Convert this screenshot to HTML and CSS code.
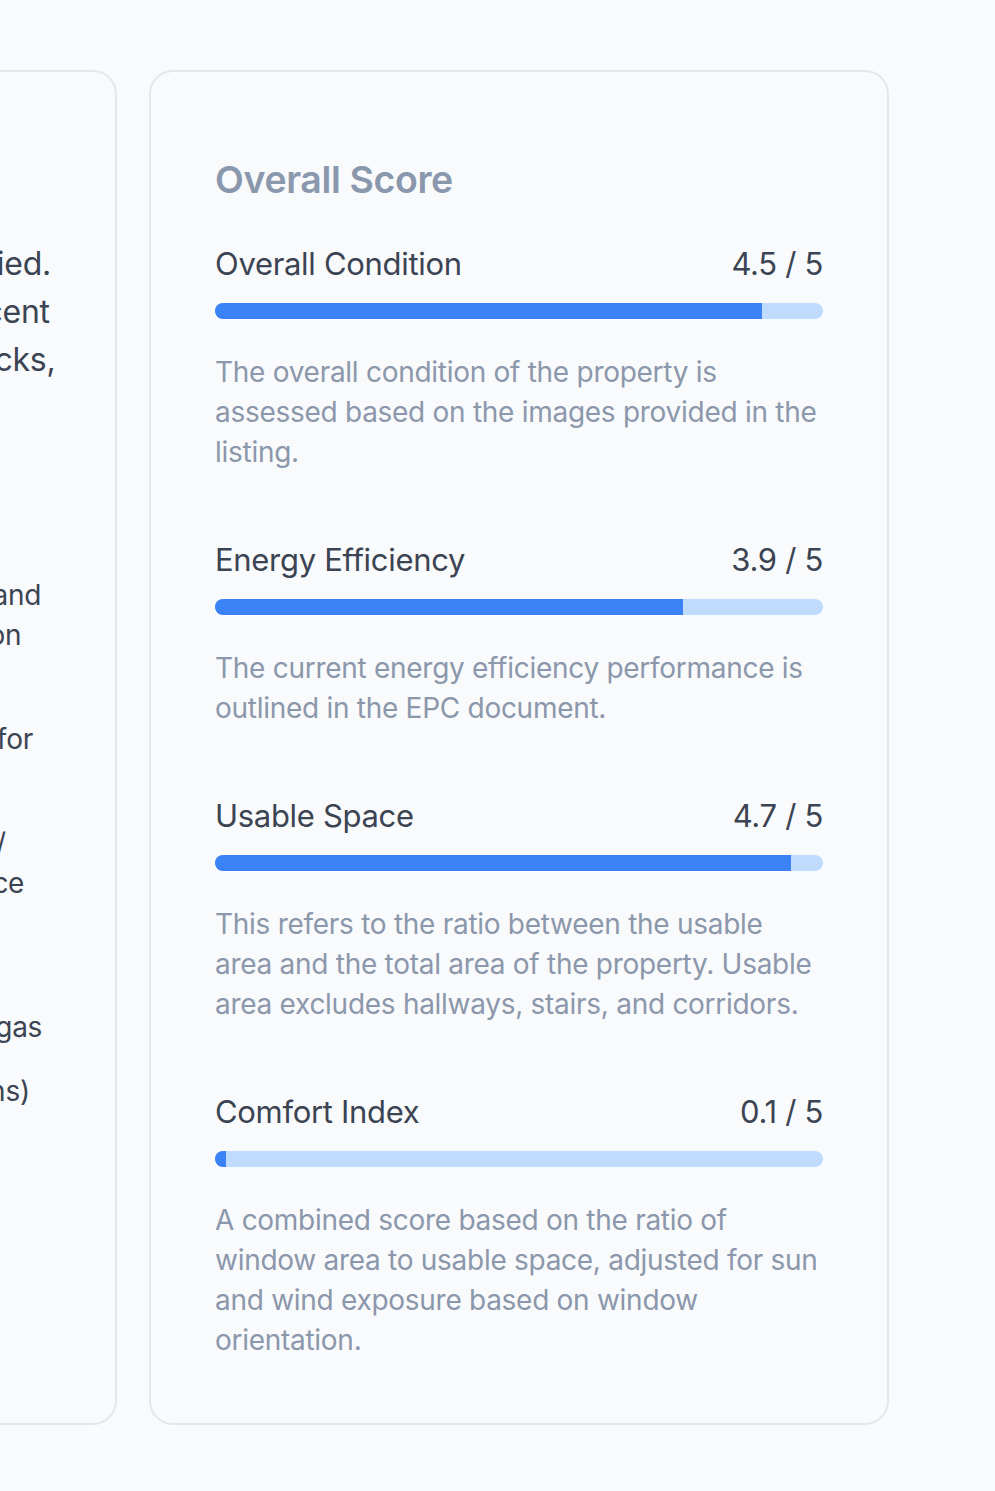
FILE: index.html
```html
<!DOCTYPE html>
<html lang="en">
<head>
<meta charset="utf-8">
<title>Property Report</title>
<link rel="stylesheet" href="styles.css">
</head>
<body>
<main class="cards">
  <section class="card card-notes">
    <h2 class="card-title">Notes</h2>
    <p class="notes-text">The flat is in good order and is occupied.<br>The kitchen and the bathroom are recent<br>and the walls show a few surface cracks,<br>none of them structural.</p>
    <h3 class="notes-heading">Features</h3>
    <ul class="notes-list">
      <li>Double glazing to all rooms, solar heating, and<br>a new gas combi boiler, with a timer fitted on</li>
      <li>South-facing rear garden with patio<br>and a brick-built studio that could be used for<br>storage or a home office.</li>
      <li>Off-street parking for cars with a drive and/<br>or a garage, permit parking and visitor space<br>available on request.</li>
      <li>Connected to all mains services:<br>water, sewage, electricity, fibre and mains gas</li>
      <li>Council tax is band C (subject to exemptions)</li>
    </ul>
  </section>

  <section class="card card-score">
    <h2 class="card-title">Overall Score</h2>
    <div class="metrics">
      <div class="metric">
        <div class="metric-head">
          <span class="metric-name">Overall Condition</span>
          <span class="metric-value">4.5 / 5</span>
        </div>
        <div class="bar"><div class="bar-fill" style="width: 90%"></div></div>
        <p class="metric-desc">The overall condition of the property is assessed based on the images provided in the listing.</p>
      </div>
      <div class="metric">
        <div class="metric-head">
          <span class="metric-name">Energy Efficiency</span>
          <span class="metric-value">3.9 / 5</span>
        </div>
        <div class="bar"><div class="bar-fill" style="width: 77%"></div></div>
        <p class="metric-desc">The current energy efficiency performance is outlined in the EPC document.</p>
      </div>
      <div class="metric">
        <div class="metric-head">
          <span class="metric-name">Usable Space</span>
          <span class="metric-value">4.7 / 5</span>
        </div>
        <div class="bar"><div class="bar-fill" style="width: 94.8%"></div></div>
        <p class="metric-desc">This refers to the ratio between the usable area and the total area of the property. Usable area excludes hallways, stairs, and corridors.</p>
      </div>
      <div class="metric">
        <div class="metric-head">
          <span class="metric-name">Comfort Index</span>
          <span class="metric-value">0.1 / 5</span>
        </div>
        <div class="bar"><div class="bar-fill" style="width: 1.8%"></div></div>
        <p class="metric-desc">A combined score based on the ratio of window area to usable space, adjusted for sun and wind exposure based on window orientation.</p>
      </div>
    </div>
  </section>
</main>
</body>
</html>
```

FILE: styles.css
```css
html, body {
  margin: 0;
  padding: 0;
}

body {
  background: #f8fafc;
  font-family: Inter, "Noto Sans", "Liberation Sans", sans-serif;
  color: #374151;
  overflow: hidden;
}

.cards {
  display: flex;
  gap: 32px;
  margin-left: -623px;
  padding-top: 70px;
  padding-bottom: 66px;
}

.card {
  flex: 0 0 740px;
  min-width: 0;
  box-sizing: border-box;
  background: #f9fafb;
  border: 2px solid #e5e7eb;
  border-radius: 24px;
  padding: 80px 64px 63px;
}

.card-title {
  margin: 0 0 32px;
  font-size: 37.5px;
  line-height: 56px;
  font-weight: 600;
  letter-spacing: -0.01em;
  color: #8a98ad;
}

/* Notes card (partially off-screen) */
.notes-text {
  margin: 0;
  font-size: 32px;
  line-height: 48px;
  white-space: nowrap;
  letter-spacing: -0.008em;
  color: #3b4453;
}

.notes-heading {
  margin: 32px 0 63px;
  font-size: 32px;
  line-height: 48px;
  font-weight: 600;
  color: #3b4453;
}

.notes-list {
  margin: 0;
  padding: 0;
  list-style: none;
  display: flex;
  flex-direction: column;
  gap: 24px;
  font-size: 28px;
  line-height: 40px;
  white-space: nowrap;
  letter-spacing: -0.01em;
  color: #3b4453;
}

/* Score card */
.metrics {
  display: flex;
  flex-direction: column;
  gap: 64px;
}

.metric-head {
  display: flex;
  justify-content: space-between;
  align-items: baseline;
  font-size: 31px;
  line-height: 48px;
  letter-spacing: -0.01em;
  color: #3b4453;
}

.bar {
  margin-top: 15px;
  height: 16px;
  border-radius: 8px;
  background: #bfdbfe;
  overflow: hidden;
}

.bar-fill {
  height: 100%;
  background: #3b82f6;
}

.metric-desc {
  margin: 33px 0 0;
  font-size: 28px;
  line-height: 40px;
  letter-spacing: -0.01em;
  color: #8b97ab;
}
```
